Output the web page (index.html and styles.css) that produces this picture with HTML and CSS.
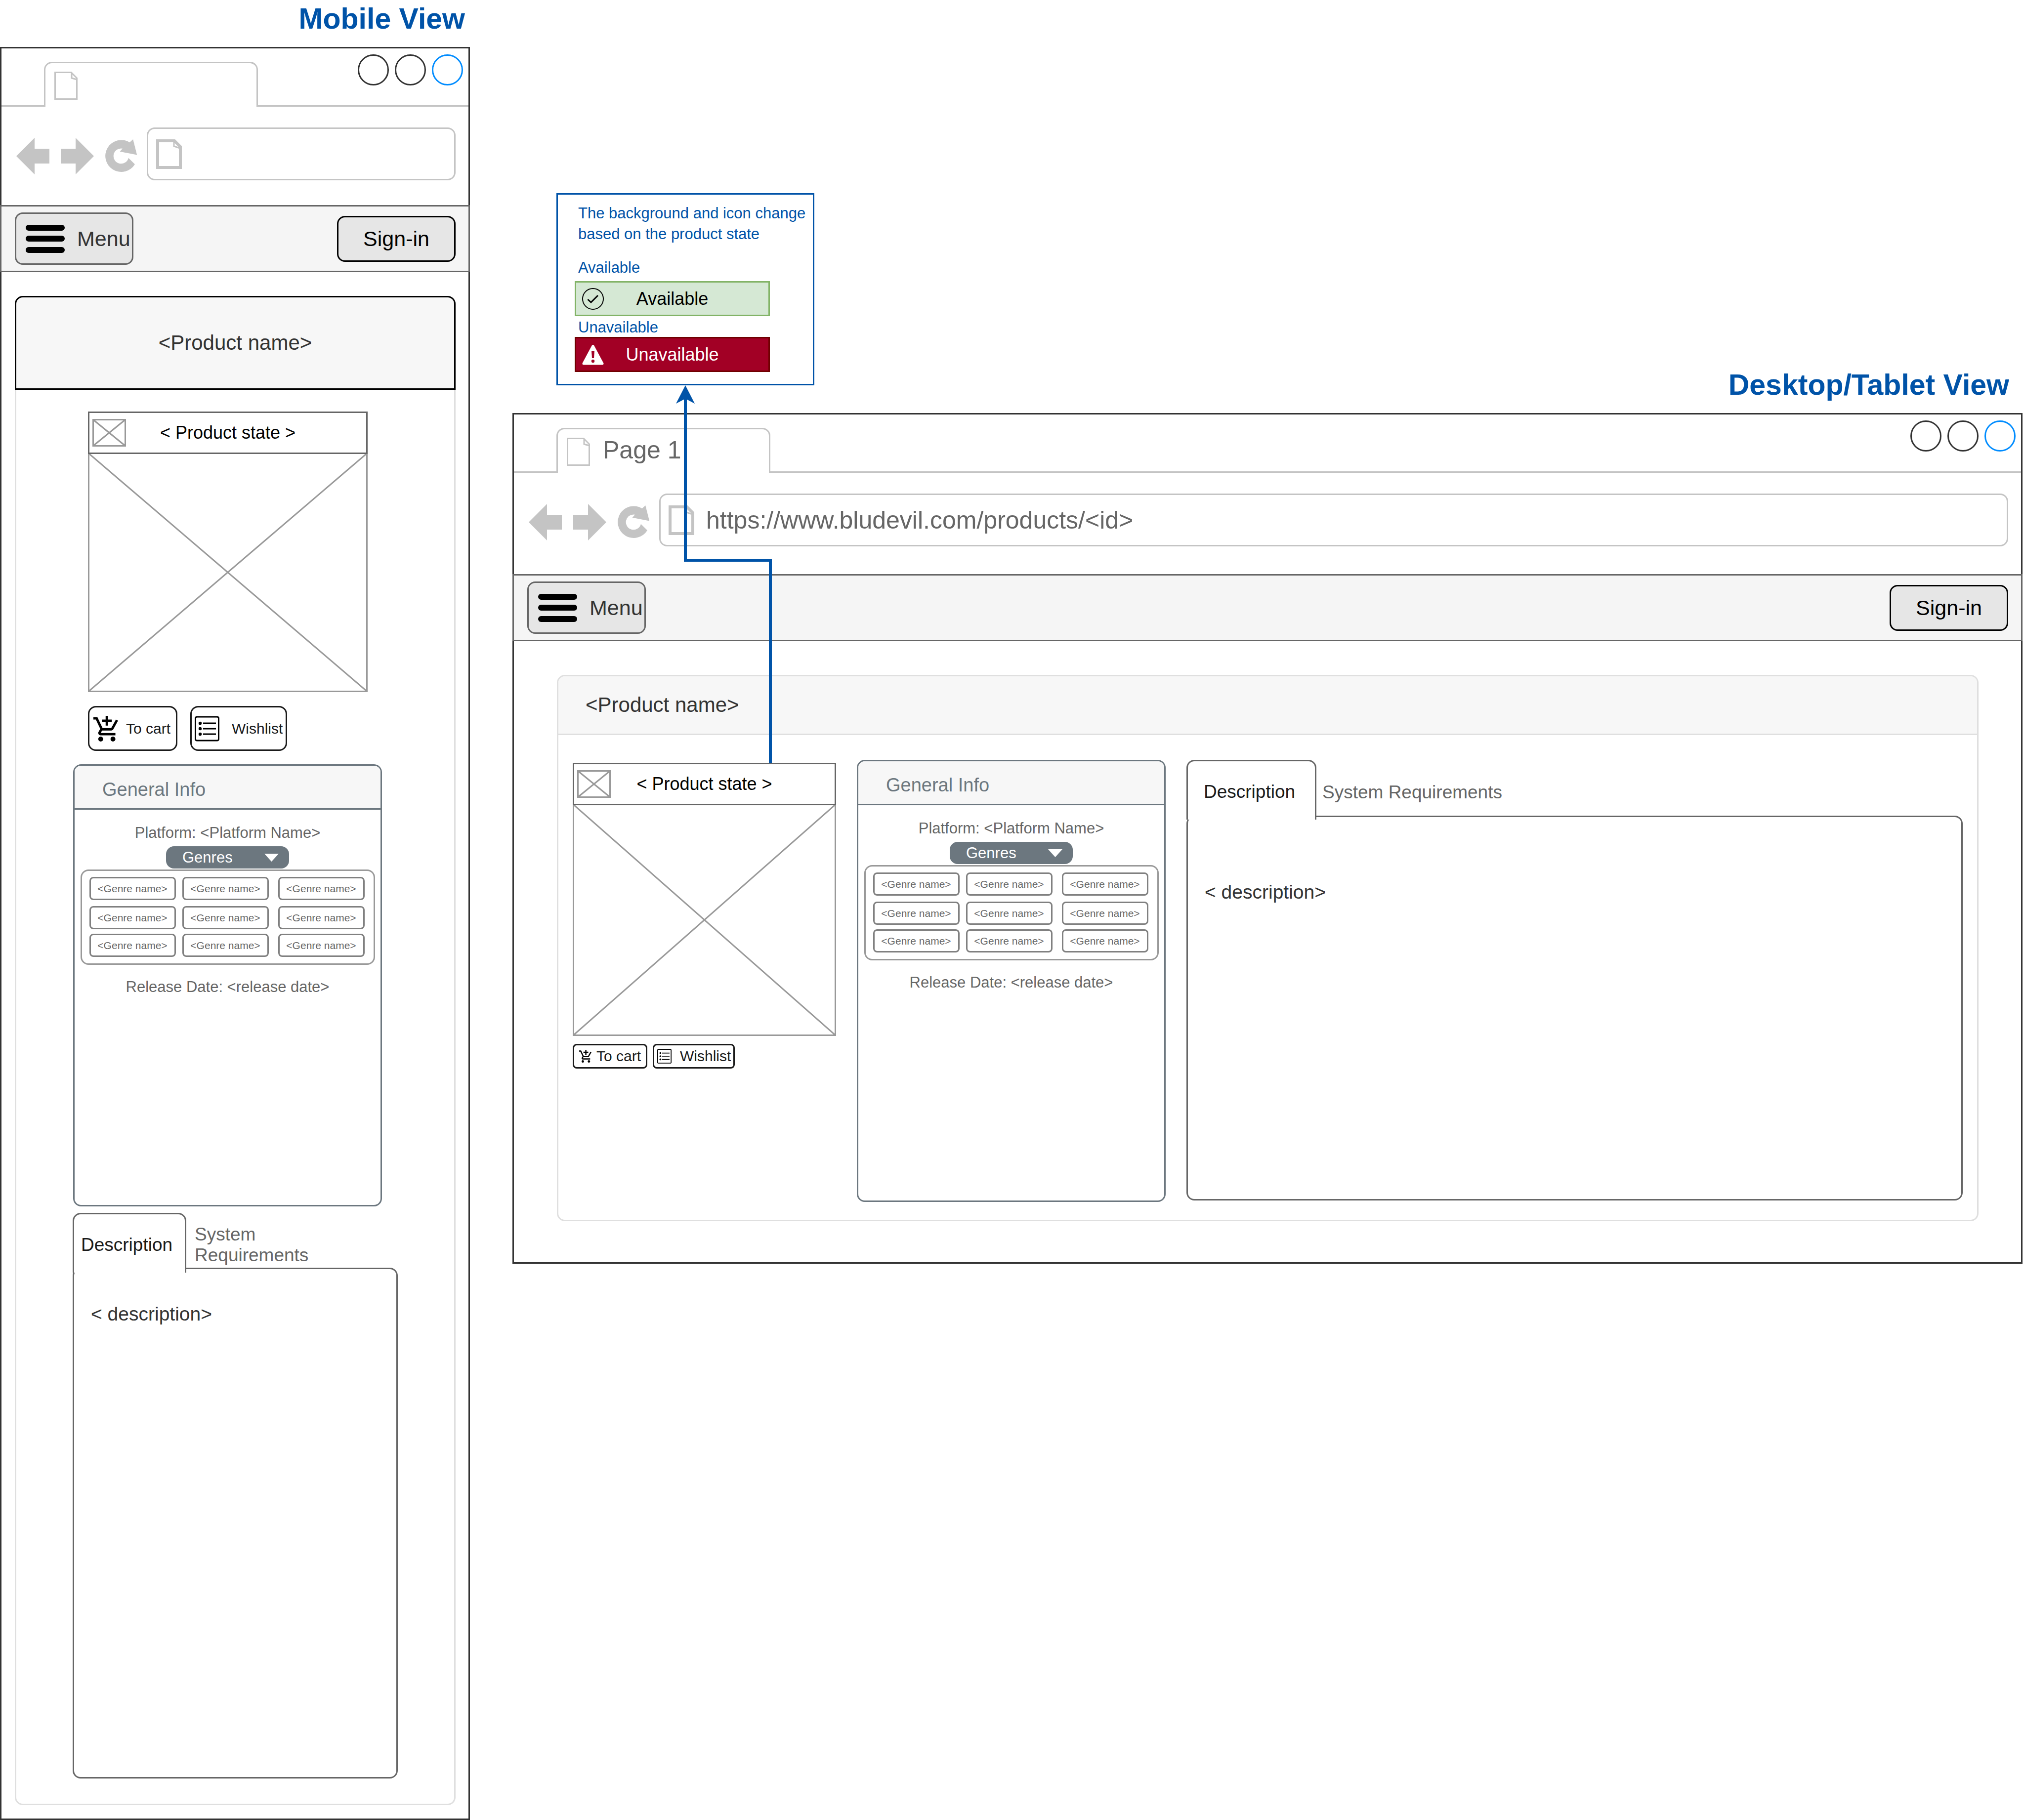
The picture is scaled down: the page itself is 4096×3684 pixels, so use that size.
FILE: index.html
```html
<!DOCTYPE html>
<html lang="en">
<head>
<meta charset="utf-8">
<title>Product page wireframe</title>
<link rel="stylesheet" href="styles.css">
</head>
<body>
<svg class="sprite" aria-hidden="true">
  <symbol id="file" viewBox="0 0 47 57">
    <path d="M1.5 1.5H34L45.5 13V55.5H1.5ZM35 1.5V13L45.5 16" fill="none" stroke="#c4c4c4" stroke-width="3"/>
  </symbol>
  <symbol id="file-bold" viewBox="0 0 52 60">
    <path d="M3 3H37L49 15V57H3Z" fill="none" stroke="#c4c4c4" stroke-width="6"/>
    <path d="M36 4V14L48 18" fill="none" stroke="#c4c4c4" stroke-width="3"/>
  </symbol>
  <symbol id="back" viewBox="0 0 67 74"><path d="M0 37L37 0V22H67V52H37V74Z" fill="#c4c4c4"/></symbol>
  <symbol id="forward" viewBox="0 0 67 74"><path d="M67 37L30 0V22H0V52H30V74Z" fill="#c4c4c4"/></symbol>
  <symbol id="reload" viewBox="0 0 65 67">
    <path d="M60 50.6A32.3 32.3 0 1 1 49.4 6.2L56.2 0L64.2 31.5L29.6 24.8L35 18.8A15.4 15.4 0 1 0 47 37.7Z" fill="#c4c4c4"/>
  </symbol>
  <symbol id="bars" viewBox="0 0 79 57">
    <rect width="79" height="12" rx="6"/><rect y="22" width="79" height="12" rx="6"/><rect y="45" width="79" height="12" rx="6"/>
  </symbol>
  <symbol id="cross" viewBox="0 0 68 56">
    <path d="M1.5 1.5H66.5V54.5H1.5ZL66.5 54.5M66.5 1.5L1.5 54.5" fill="none" stroke="#999" stroke-width="3"/>
  </symbol>
  <symbol id="cart" viewBox="1 1 20.2 21">
    <path d="M11 9h2V6h3V4h-3V1h-2v3H8v2h3v3zm-4 9c-1.1 0-1.99.9-1.99 2S5.9 22 7 22s2-.9 2-2-.9-2-2-2zm10 0c-1.1 0-1.99.9-1.99 2s.89 2 1.99 2 2-.9 2-2-.9-2-2-2zm-9.83-3.25l.03-.12.9-1.63h7.45c.75 0 1.41-.41 1.75-1.03l3.86-7.01L19.42 4h-.01l-1.1 2-2.76 5H8.53l-.13-.27L6.16 6l-.95-2-.94-2H1v2h2l3.6 7.59-1.35 2.45c-.16.28-.25.61-.25.96 0 1.1.9 2 2 2h12v-2H7.42c-.13 0-.25-.11-.25-.25z"/>
  </symbol>
  <symbol id="list" viewBox="0 0 50 51">
    <rect x="1.5" y="1.5" width="47" height="48" rx="3" fill="none" stroke="#000" stroke-width="3"/>
    <path d="M17 14.5H43M17 25.5H43M17 36.5H43" stroke="#000" stroke-width="3"/>
    <circle cx="11" cy="14.5" r="3.2"/><circle cx="11" cy="25.5" r="3.2"/><circle cx="11" cy="36.5" r="3.2"/>
  </symbol>
</svg>

<main class="board">
  <section class="mobile">
    <h2 class="view-title">Mobile View</h2>
    <div class="browser">
      <div class="tab-strip">
        <div class="browser-tab"><svg class="file-icon"><use href="#file"/></svg></div>
        <div class="window-dots"><span class="dot"></span><span class="dot"></span><span class="dot dot-active"></span></div>
      </div>
      <div class="nav-row">
        <div class="nav-icons">
          <button class="nav-btn" aria-label="Back"><svg class="arrow-icon"><use href="#back"/></svg></button>
          <button class="nav-btn" aria-label="Forward"><svg class="arrow-icon"><use href="#forward"/></svg></button>
          <button class="nav-btn" aria-label="Reload"><svg class="reload-icon"><use href="#reload"/></svg></button>
        </div>
        <label class="address"><svg class="address-icon"><use href="#file-bold"/></svg><input class="address-input" type="text" aria-label="Address"></label>
      </div>
      <header class="site-header">
        <button class="menu-btn"><svg class="bars-icon"><use href="#bars"/></svg>Menu</button>
        <button class="signin-btn">Sign-in</button>
      </header>
      <article class="product">
        <h1 class="product-name">&lt;Product name&gt;</h1>
        <div class="product-body">
          <div class="media">
            <div class="state"><svg class="cross-icon"><use href="#cross"/></svg><span>&lt; Product state &gt;</span></div>
            <svg class="picture" viewBox="0 0 100 100" preserveAspectRatio="none"><path class="picture-line" d="M0 0L100 100M100 0L0 100"/></svg>
            <div class="actions">
              <button class="action cart-btn"><svg class="action-icon"><use href="#cart"/></svg>To cart</button>
              <button class="action wish-btn"><svg class="action-icon"><use href="#list"/></svg>Wishlist</button>
            </div>
          </div>
          <section class="info">
            <h2 class="info-title">General Info</h2>
            <p class="info-line">Platform: &lt;Platform Name&gt;</p>
            <button class="genres-btn" aria-expanded="true">Genres<svg class="caret" viewBox="0 0 29 16"><path d="M0 0H29L14.500 16Z" fill="#fff"/></svg></button>
            <ul class="genres">
              <li class="genre">&lt;Genre name&gt;</li><li class="genre">&lt;Genre name&gt;</li><li class="genre">&lt;Genre name&gt;</li>
              <li class="genre">&lt;Genre name&gt;</li><li class="genre">&lt;Genre name&gt;</li><li class="genre">&lt;Genre name&gt;</li>
              <li class="genre">&lt;Genre name&gt;</li><li class="genre">&lt;Genre name&gt;</li><li class="genre">&lt;Genre name&gt;</li>
            </ul>
            <p class="info-line release">Release Date: &lt;release date&gt;</p>
          </section>
          <section class="details">
            <div class="detail-tabs" role="tablist">
              <button class="detail-tab active" role="tab" aria-selected="true">Description</button>
              <button class="detail-tab" role="tab" aria-selected="false">System Requirements</button>
            </div>
            <div class="detail-panel" role="tabpanel">&lt; description&gt;</div>
          </section>
        </div>
      </article>
    </div>
  </section>

  <section class="desktop">
    <div class="desktop-top">
      <aside class="note">
        <p class="note-text">The background and icon change based on the product state</p>
        <p class="note-label first">Available</p>
        <div class="badge available">
          <svg class="badge-icon" viewBox="0 0 44 44"><circle cx="22" cy="22" r="21" fill="none" stroke="#000" stroke-width="2"/><path d="M11.500 23L18 29L32 15" fill="none" stroke="#000" stroke-width="3"/></svg>
          <span>Available</span>
        </div>
        <p class="note-label">Unavailable</p>
        <div class="badge unavailable">
          <svg class="badge-icon" viewBox="0 0 44 44"><path d="M22 4.500L41 40H3Z" fill="#fff" stroke="#fff" stroke-width="5" stroke-linejoin="round"/><path d="M19 14H25L24 29H20Z" fill="#a20025"/><circle cx="22" cy="35" r="3.200" fill="#a20025"/></svg>
          <span>Unavailable</span>
        </div>
      </aside>
      <h2 class="view-title">Desktop/Tablet View</h2>
    </div>
    <div class="browser">
      <div class="tab-strip">
        <div class="browser-tab"><svg class="file-icon"><use href="#file"/></svg>Page 1</div>
        <div class="window-dots"><span class="dot"></span><span class="dot"></span><span class="dot dot-active"></span></div>
      </div>
      <div class="nav-row">
        <div class="nav-icons">
          <button class="nav-btn" aria-label="Back"><svg class="arrow-icon"><use href="#back"/></svg></button>
          <button class="nav-btn" aria-label="Forward"><svg class="arrow-icon"><use href="#forward"/></svg></button>
          <button class="nav-btn" aria-label="Reload"><svg class="reload-icon"><use href="#reload"/></svg></button>
        </div>
        <label class="address"><svg class="address-icon"><use href="#file-bold"/></svg><input class="address-input" type="text" aria-label="Address" value="https://www.bludevil.com/products/&lt;id&gt;"></label>
      </div>
      <header class="site-header">
        <button class="menu-btn"><svg class="bars-icon"><use href="#bars"/></svg>Menu</button>
        <button class="signin-btn">Sign-in</button>
      </header>
      <article class="product">
        <h1 class="product-name">&lt;Product name&gt;</h1>
        <div class="product-body">
          <div class="media">
            <div class="state"><svg class="cross-icon"><use href="#cross"/></svg><span>&lt; Product state &gt;</span></div>
            <svg class="picture" viewBox="0 0 100 100" preserveAspectRatio="none"><path class="picture-line" d="M0 0L100 100M100 0L0 100"/></svg>
            <div class="actions">
              <button class="action cart-btn"><svg class="action-icon"><use href="#cart"/></svg>To cart</button>
              <button class="action wish-btn"><svg class="action-icon"><use href="#list"/></svg>Wishlist</button>
            </div>
          </div>
          <section class="info">
            <h2 class="info-title">General Info</h2>
            <p class="info-line">Platform: &lt;Platform Name&gt;</p>
            <button class="genres-btn" aria-expanded="true">Genres<svg class="caret" viewBox="0 0 29 16"><path d="M0 0H29L14.500 16Z" fill="#fff"/></svg></button>
            <ul class="genres">
              <li class="genre">&lt;Genre name&gt;</li><li class="genre">&lt;Genre name&gt;</li><li class="genre">&lt;Genre name&gt;</li>
              <li class="genre">&lt;Genre name&gt;</li><li class="genre">&lt;Genre name&gt;</li><li class="genre">&lt;Genre name&gt;</li>
              <li class="genre">&lt;Genre name&gt;</li><li class="genre">&lt;Genre name&gt;</li><li class="genre">&lt;Genre name&gt;</li>
            </ul>
            <p class="info-line release">Release Date: &lt;release date&gt;</p>
          </section>
          <section class="details">
            <div class="detail-tabs" role="tablist">
              <button class="detail-tab active" role="tab" aria-selected="true">Description</button>
              <button class="detail-tab" role="tab" aria-selected="false">System Requirements</button>
            </div>
            <div class="detail-panel" role="tabpanel">&lt; description&gt;</div>
          </section>
        </div>
      </article>
    </div>
    <svg class="connector" viewBox="0 0 200 765" aria-hidden="true">
      <path d="M190 765V354H18V20" fill="none" stroke="#0053a8" stroke-width="6"/>
      <path d="M18 0L37 37L18 27L-1 37Z" fill="#0053a8"/>
    </svg>
  </section>
</main>
</body>
</html>
```
FILE: styles.css
```css
*, *::before, *::after { box-sizing: border-box; }

body {
  margin: 0;
  background: #fff;
  color: #000;
  font-family: "Liberation Sans", Arial, sans-serif;
}

h1, h2, p, ul { margin: 0; padding: 0; font-weight: normal; }
ul { list-style: none; }
svg { display: block; flex: none; }
button { margin: 0; padding: 0; border: 0; background: none; font: inherit; color: inherit; text-align: left; }
.sprite { position: absolute; width: 0; height: 0; }

.board {
  display: grid;
  grid-template-columns: 951px 1fr;
  column-gap: 86px;
  align-items: start;
  padding-right: 3px;
}

.view-title {
  font-size: 59px;
  line-height: 68px;
  font-weight: bold;
  text-align: right;
  color: #0053a8;
  margin-bottom: 23px;
}
.mobile .view-title { margin-top: 4px; margin-right: 10px; }
.desktop .view-title { margin-right: 27px; }

/* Browser window */
.browser { border: 3px solid #333; }

.tab-strip {
  display: flex;
  justify-content: space-between;
  height: 118px;
  padding: 12px 11px 0 86px;
  border-bottom: 3px solid #c4c4c4;
}
.browser-tab {
  display: flex;
  align-items: flex-start;
  gap: 26px;
  align-self: flex-end;
  width: 433px;
  height: 91px;
  margin-bottom: -3px;
  padding: 17px 18px 0;
  border: 3px solid #c4c4c4;
  border-bottom: 0;
  border-radius: 16px 16px 0 0;
  background: #fff;
  font-size: 50px;
  line-height: 50px;
  color: #666;
}
.file-icon { width: 47px; height: 57px; }
.window-dots { display: flex; gap: 12px; }
.dot { width: 63px; height: 63px; border: 3px solid #333; border-radius: 50%; }
.dot-active { border-color: #008cff; }

.nav-row { display: flex; gap: 19px; padding: 42px 26px 50px 30px; }
.desktop .nav-row { padding-bottom: 56px; }
.nav-icons { display: flex; align-items: center; gap: 23px; padding-top: 8px; }
.arrow-icon { width: 67px; height: 74px; }
.reload-icon { width: 65px; height: 67px; }
.address {
  flex: 1;
  display: flex;
  align-items: center;
  gap: 24px;
  height: 107px;
  min-width: 0;
  padding: 0 16px;
  border: 3px solid #c4c4c4;
  border-radius: 16px;
}
.address-icon { width: 52px; height: 60px; }
.address-input {
  flex: 1;
  min-width: 0;
  padding: 0;
  border: 0;
  outline: 0;
  background: none;
  font: 50px "Liberation Sans", Arial, sans-serif;
  color: #666;
}

.site-header {
  display: flex;
  align-items: center;
  justify-content: space-between;
  height: 136px;
  margin: 0 -3px;
  padding: 0 26px 0 27px;
  border: 3px solid #666;
  background: #f5f5f5;
}
.menu-btn, .signin-btn {
  display: flex;
  align-items: center;
  width: 240px;
  border: 3px solid #666;
  border-radius: 16px;
  background: #e6e6e6;
  font-size: 43px;
}
.menu-btn { gap: 25px; height: 106px; padding-left: 19px; color: #333; }
.signin-btn { justify-content: center; height: 93px; border-color: #000; }
.bars-icon { width: 79px; height: 57px; }

/* Product card */
.product {
  margin: 48px 26px 27px 27px;
  border: 3px solid #dfdfdf;
  border-radius: 16px;
}
.desktop .product { margin: 68px 86px 83px 87px; }
.product-name {
  display: flex;
  align-items: center;
  background: #f7f7f7;
  font-size: 42px;
  color: #333;
}
.mobile .product-name {
  justify-content: center;
  height: 190px;
  margin: -3px -3px 0;
  border: 3px solid #000;
  border-radius: 16px 16px 0 0;
}
.desktop .product-name {
  height: 119px;
  padding-left: 55px;
  border-bottom: 3px solid #dfdfdf;
  border-radius: 13px 13px 0 0;
}
.mobile .product-body { display: flex; flex-direction: column; padding: 44px 114px 51px; }
.desktop .product-body {
  display: grid;
  grid-template-columns: 533px 625px 1fr;
  column-gap: 42px;
  align-items: start;
  padding: 50px 29px 36px;
}

.mobile .media { width: 566px; margin-left: 31px; }
.desktop .media { padding-top: 6px; }
.state {
  display: grid;
  grid-template-columns: 68px 1fr 68px;
  align-items: center;
  height: 86px;
  padding: 0 6px;
  border: 3px solid #666;
  font-size: 36px;
  text-align: center;
}
.cross-icon { width: 68px; height: 56px; }
.picture { width: 100%; height: 482px; border: 3px solid #999; border-top: 0; }
.desktop .picture { height: 467px; }
.picture-line { stroke: #999; stroke-width: 3px; vector-effect: non-scaling-stroke; }

.actions { display: flex; gap: 26px; margin-top: 28px; }
.action {
  display: flex;
  align-items: center;
  height: 91px;
  border: 3px solid #1a1a1a;
  border-radius: 16px;
  font-size: 30px;
  color: #1a1a1a;
  white-space: nowrap;
}
.action-icon { width: 50px; height: 52px; }
.cart-btn { width: 181px; padding-left: 8px; gap: 16px; }
.wish-btn { width: 196px; padding-left: 6px; gap: 25px; }
.desktop .actions { gap: 11px; margin-top: 16px; }
.desktop .action { height: 50px; border-radius: 8px; }
.desktop .cart-btn { width: 151px; padding-left: 10px; gap: 10px; }
.desktop .cart-btn .action-icon { width: 25px; height: 26px; }
.desktop .wish-btn { width: 166px; padding-left: 6px; gap: 17px; }
.desktop .wish-btn .action-icon { width: 29px; height: 30px; }

/* General info */
.info {
  display: flex;
  flex-direction: column;
  align-items: center;
  min-height: 895px;
  border: 3px solid #6c777f;
  border-radius: 16px;
}
.mobile .info { width: 625px; margin: 27px 0 13px 1px; }
.info-title {
  display: flex;
  align-items: center;
  align-self: stretch;
  height: 89px;
  padding: 10px 0 0 56px;
  border-bottom: 3px solid #6c777f;
  border-radius: 13px 13px 0 0;
  background: #f7f7f7;
  font-size: 38px;
  color: #6c777f;
}
.info-line { margin-top: 27px; font-size: 31px; line-height: 40px; color: #666; }
.release { margin-top: 25px; }
.genres-btn {
  display: flex;
  align-items: center;
  justify-content: space-between;
  width: 249px;
  height: 45px;
  margin-top: 7px;
  padding: 0 21px 0 33px;
  border-radius: 16px;
  background: #6c777f;
  font-size: 31px;
  color: #fff;
}
.caret { width: 29px; height: 16px; }
.genres {
  display: grid;
  grid-template-columns: 188px 194px 175px;
  grid-template-rows: 59px 56px 47px;
  width: 596px;
  height: 193px;
  margin-top: 2px;
  padding: 12px 0 0 15px;
  border: 3px solid #999;
  border-radius: 16px;
}
.genre {
  width: 175px;
  height: 47px;
  border: 3px solid #808080;
  border-radius: 8px;
  font-size: 21px;
  line-height: 41px;
  text-align: center;
  color: #666;
}

/* Description and requirements */
.mobile .details { width: 658px; }
.detail-tabs { display: flex; align-items: center; gap: 17px; height: 111px; padding-top: 19px; }
.detail-tab { font-size: 37px; line-height: 42px; color: #666; }
.mobile .detail-tab { width: 240px; }
.detail-tab.active {
  position: relative;
  flex: none;
  width: 230px;
  height: 121px;
  margin: -19px 0 -10px;
  align-self: flex-start;
  padding: 6px 0 0 14px;
  border: 3px solid #666;
  border-bottom: 0;
  border-radius: 16px 16px 0 0;
  background: #fff;
  color: #1a1a1a;
}
.detail-panel {
  min-height: 1034px;
  padding: 69px 34px;
  border: 3px solid #666;
  border-radius: 16px;
  font-size: 39px;
  line-height: 44px;
  color: #333;
}
.desktop .detail-tabs { gap: 12px; height: 113px; }
.desktop .detail-tab.active { width: 263px; padding-left: 32px; }
.desktop .detail-panel { min-height: 779px; padding-top: 130px; }

/* State note and its connector */
.desktop { position: relative; }
.desktop-top {
  display: flex;
  align-items: flex-end;
  justify-content: space-between;
  padding: 391px 0 0 89px;
}
.note {
  width: 522px;
  height: 389px;
  margin-bottom: 56px;
  padding: 17px 0 0 34px;
  border: 3px solid #0053a8;
  font-size: 31px;
  color: #0053a8;
}
.note-text { padding-left: 7px; line-height: 42px; }
.note-label { padding-left: 7px; margin-top: 4px; line-height: 38px; }
.note-label.first { margin: 28px 0 8px; }
.badge {
  display: grid;
  grid-template-columns: 44px 1fr 44px;
  align-items: center;
  width: 395px;
  height: 71px;
  padding: 0 12px;
  border: 3px solid;
  font-size: 36px;
  text-align: center;
}
.badge-icon { width: 44px; height: 44px; }
.available { border-color: #82b366; background: #d5e8d4; }
.available span { color: #000; }
.unavailable { border-color: #6f0000; background: #a20025; }
.unavailable span { color: #fff; }

.connector {
  position: absolute;
  left: 332px;
  top: 780px;
  width: 200px;
  height: 765px;
  overflow: visible;
  pointer-events: none;
}
```
